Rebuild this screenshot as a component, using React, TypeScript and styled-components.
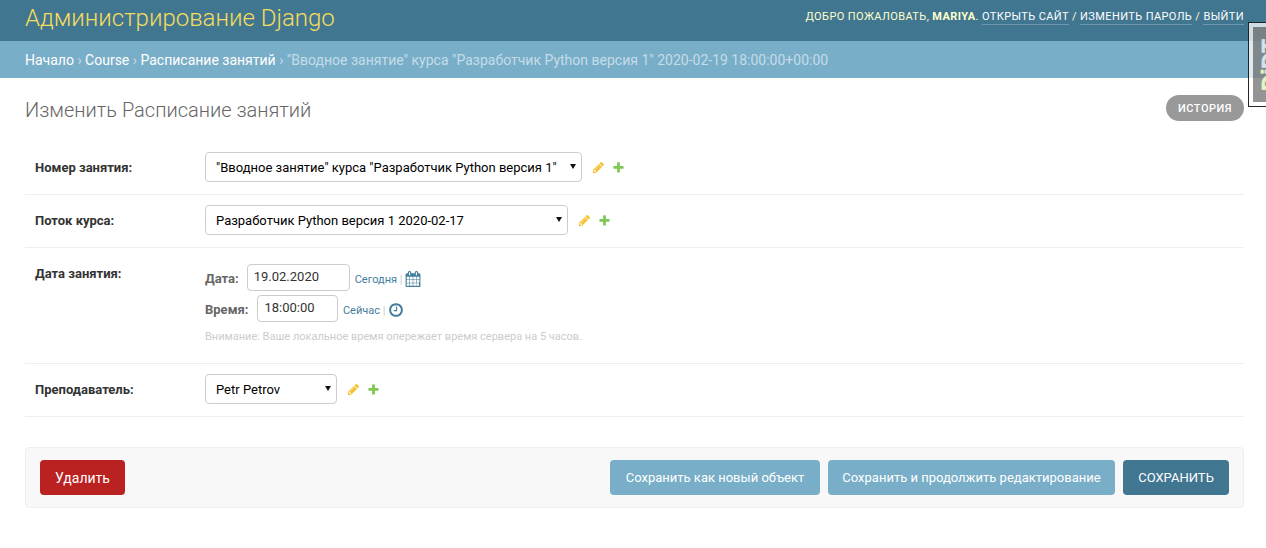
import React from "react";
import styled, { createGlobalStyle } from "styled-components";

const Global = createGlobalStyle`
  html, body { margin: 0; padding: 0; background: #fff; overflow: hidden; }
  body { font-family: Roboto, "Lucida Grande", Verdana, Arial, sans-serif; font-size: 14px; color: #333; }
  * { box-sizing: border-box; }
`;

const Page = styled.div`position: relative; width: 1266px; height: 548px; overflow: hidden;`;
const Header = styled.header`
  height: 41px; background: #417690; padding: 0 22px 0 25px;
  display: flex; justify-content: space-between; align-items: center;
`;
const Branding = styled.h1`margin: 0; font-size: 24px; font-weight: 300; color: #f5dd5d; line-height: 34px; position: relative; top: -3px;`;
const UserTools = styled.div`
  font-size: 11px; letter-spacing: 0.4px; text-transform: uppercase; color: #ffc; line-height: 14px;
  position: relative; top: -4px;
  strong { font-weight: 700; }
`;
const ToolLink = styled.a`color: #fff; border-bottom: 1px solid rgba(255,255,255,0.25); padding-bottom: 1px;`;
const Crumbs = styled.nav`
  height: 37px; background: #79aec8; padding: 0 25px; display: flex; align-items: center;
  font-size: 14px; color: #c4dce8; white-space: pre;
`;
const Crumb = styled.a`color: #fff;`;
const Content = styled.main`padding: 0 22px 0 25px;`;
const TitleRow = styled.div`display: flex; justify-content: space-between; align-items: center; height: 64px;`;
const Title = styled.h2`margin: 0; font-size: 20px; font-weight: 300; color: #666;`;
const HistoryButton = styled.a`
  display: flex; align-items: center; height: 26px; padding: 0 12px; border-radius: 15px; background: #999;
  color: #fff; font-size: 11px; font-weight: 500; letter-spacing: 0.5px; text-transform: uppercase;
  position: relative; top: -2px;
`;
const Row = styled.div<{ $h: number }>`
  height: ${(p) => p.$h}px; padding: 10px; border-bottom: 1px solid #eee; display: flex; align-items: flex-start;
`;
const Label = styled.label`width: 170px; flex: none; font-size: 13px; font-weight: 700; color: #333; padding-top: 8px; line-height: 16px;`;
const FieldLine = styled.div`display: flex; align-items: center; height: 30px;`;
const SelectWrap = styled.div<{ $w: number }>`
  position: relative; width: ${(p) => p.$w}px; height: 30px;
  &::after {
    content: ""; position: absolute; right: 6px; top: 12px; width: 0; height: 0; pointer-events: none;
    border-left: 3px solid transparent; border-right: 3px solid transparent; border-top: 5px solid #111;
  }
`;
const Select = styled.select`
  appearance: none; width: 100%; height: 30px; padding: 0 20px 0 10px; background: #fff; color: #000;
  border: 1px solid #ccc; border-radius: 4px; font-family: Roboto, sans-serif; font-size: 13px; outline: none;
`;
const IconLink = styled.a<{ $gap: number }>`display: inline-flex; margin-left: ${(p) => p.$gap}px; width: 13px; height: 13px;`;
const DateTime = styled.div`display: flex; flex-direction: column; margin-top: 6px;`;
const DTLine = styled.div`display: flex; align-items: center; height: 27px; margin-bottom: 4px; font-size: 13px; color: #666; font-weight: 700;`;
const DTLabel = styled.span`padding-top: 2px;`;
const TextInput = styled.input<{ $w: number; $gap: number }>`
  width: ${(p) => p.$w}px; height: 27px; margin-left: ${(p) => p.$gap}px; padding: 0 6px 2px 6px; border: 1px solid #ccc; border-radius: 4px;
  font-family: Roboto, sans-serif; font-size: 13px; color: #333; outline: none;
`;
const Shortcut = styled.span`margin-left: 5px; padding-top: 3px; font-size: 11px; font-weight: 400; color: #ccc; display: inline-flex; align-items: center; white-space: pre;`;
const ShortcutLink = styled.a`color: #447e9b;`;
const Help = styled.p`margin: 4px 0 0; font-size: 11px; font-weight: 400; color: #ccc; line-height: 14px;`;
const SubmitRow = styled.div`
  margin-top: 30px; height: 61px; padding: 0 14px; background: #f8f8f8; border: 1px solid #eee; border-radius: 4px;
  display: flex; align-items: center; gap: 8px;
`;
const Spacer = styled.div`flex: 1;`;
const Btn = styled.button<{ $bg: string; $w: number }>`
  width: ${(p) => p.$w}px; height: 35px; border: none; border-radius: 4px; background: ${(p) => p.$bg}; color: #fff;
  font-family: Roboto, sans-serif; font-size: 13px; padding: 0; margin: 0;
`;
const DeleteBtn = styled(Btn)`font-size: 14px;`;
const Handle = styled.div`
  position: absolute; top: 22px; right: 0; width: 18px; height: 85px; background: rgba(255,255,255,0.75); border: 1px solid rgba(0,0,0,0.85); border-right: none;
  overflow: hidden;
`;
const HandleInner = styled.div`
  position: absolute; left: 4px; top: 4px; bottom: 4px; width: 30px; background: rgba(0,0,0,0.42);
  display: flex; align-items: center; justify-content: center;
`;
const HandleText = styled.span`
  display: block; transform: rotate(-90deg); font-family: "Liberation Sans", sans-serif; font-size: 22px; font-weight: 700;
  color: #d4e2ea; line-height: 1; white-space: pre; -webkit-text-stroke: 0.7px currentColor;
  position: relative; left: 2px;
  b { color: #e2f7c4; font-weight: 700; }
`;

const Pencil = () => (
  <svg width="13" height="13" viewBox="0 0 1792 1792"><path fill="#f4c233" d="M491 1536l91-91-235-235-91 91v107h128v128h107zm523-928q0-22-22-22-10 0-17 7l-542 542q-7 7-7 17 0 22 22 22 10 0 17-7l542-542q7-7 7-17zm-54-192l416 416-832 832h-416v-416zm683 96q0 53-37 90l-166 166-416-416 166-165q36-38 90-38 53 0 91 38l235 234q37 39 37 91z" /></svg>
);
const Plus = () => (
  <svg width="13" height="13" viewBox="0 0 1792 1792"><path fill="#80c855" d="M1600 796v192q0 40-28 68t-68 28h-416v416q0 40-28 68t-68 28h-192q-40 0-68-28t-28-68v-416h-416q-40 0-68-28t-28-68v-192q0-40 28-68t68-28h416v-416q0-40 28-68t68-28h192q40 0 68 28t28 68v416h416q40 0 68 28t28 68z" /></svg>
);
const Calendar = () => (
  <svg width="16" height="16" viewBox="0 0 1792 1792"><path fill="#447e9b" d="M192 1664h288v-288h-288v288zm352 0h320v-288h-320v288zm-352-352h288v-320h-288v320zm352 0h320v-320h-320v320zm-352-384h288v-288h-288v288zm736 736h320v-288h-320v288zm-384-736h320v-288h-320v288zm736 736h288v-288h-288v288zm-352-352h320v-320h-320v320zm-352-864v-288q0-13-9.5-22.5t-22.5-9.5h-64q-13 0-22.5 9.5t-9.5 22.5v288q0 13 9.5 22.5t22.5 9.5h64q13 0 22.5-9.5t9.5-22.5zm736 864h288v-320h-288v320zm-384-384h320v-288h-320v288zm384 0h288v-288h-288v288zm32-480v-288q0-13-9.5-22.5t-22.5-9.5h-64q-13 0-22.5 9.5t-9.5 22.5v288q0 13 9.5 22.5t22.5 9.5h64q13 0 22.5-9.5t9.5-22.5zm384-64v1280q0 52-38 90t-90 38h-1408q-52 0-90-38t-38-90v-1280q0-52 38-90t90-38h128v-96q0-66 47-113t113-47h64q66 0 113 47t47 113v96h384v-96q0-66 47-113t113-47h64q66 0 113 47t47 113v96h128q52 0 90 38t38 90z" /></svg>
);
const Clock = () => (
  <svg width="16" height="16" viewBox="0 0 1792 1792"><path fill="#447e9b" d="M1024 544v448q0 14-9 23t-23 9h-320q-14 0-23-9t-9-23v-64q0-14 9-23t23-9h224v-352q0-14 9-23t23-9h64q14 0 23 9t9 23zm416 352q0-148-73-273t-198-198-273-73-273 73-198 198-73 273 73 273 198 198 273 73 273-73 198-198 73-273zm224 0q0 209-103 385.5t-279.5 279.5-385.5 103-385.5-103-279.5-279.5-103-385.5 103-385.5 279.5-279.5 385.5-103 385.5 103 279.5 279.5 103 385.5z" /></svg>
);

const RelatedSelect = ({ w, value }: { w: number; value: string }) => (
  <FieldLine>
    <SelectWrap $w={w}>
      <Select defaultValue={value}><option>{value}</option></Select>
    </SelectWrap>
    <IconLink $gap={10}><Pencil /></IconLink>
    <IconLink $gap={7}><Plus /></IconLink>
  </FieldLine>
);

export default function App() {
  return (
    <Page>
      <Global />
      <Header>
        <Branding>Администрирование Django</Branding>
        <UserTools>
          Добро пожаловать, <strong>Mariya</strong>. <ToolLink>Открыть сайт</ToolLink> / <ToolLink>Изменить пароль</ToolLink> / <ToolLink>Выйти</ToolLink>
        </UserTools>
      </Header>
      <Crumbs>
        <Crumb>Начало</Crumb> › <Crumb>Course</Crumb> › <Crumb>Расписание занятий</Crumb> › "Вводное занятие" курса "Разработчик Python версия 1" 2020-02-19 18:00:00+00:00
      </Crumbs>
      <Content>
        <TitleRow>
          <Title>Изменить Расписание занятий</Title>
          <HistoryButton>История</HistoryButton>
        </TitleRow>
        <div>
          <Row $h={53}>
            <Label>Номер занятия:</Label>
            <RelatedSelect w={377} value={'"Вводное занятие" курса "Разработчик Python версия 1"'} />
          </Row>
          <Row $h={53}>
            <Label>Поток курса:</Label>
            <RelatedSelect w={363} value="Разработчик Python версия 1 2020-02-17" />
          </Row>
          <Row $h={116}>
            <Label>Дата занятия:</Label>
            <DateTime>
              <DTLine>
                <DTLabel>Дата:</DTLabel>
                <TextInput $w={103} $gap={8} defaultValue="19.02.2020" />
                <Shortcut><ShortcutLink>Сегодня</ShortcutLink> | <Calendar /></Shortcut>
              </DTLine>
              <DTLine>
                <DTLabel>Время:</DTLabel>
                <TextInput $w={80.5} $gap={9} defaultValue="18:00:00" />
                <Shortcut><ShortcutLink>Сейчас</ShortcutLink> | <Clock /></Shortcut>
              </DTLine>
              <Help>Внимание: Ваше локальное время опережает время сервера на 5 часов.</Help>
            </DateTime>
          </Row>
          <Row $h={53}>
            <Label>Преподаватель:</Label>
            <RelatedSelect w={132} value="Petr Petrov" />
          </Row>
        </div>
        <SubmitRow>
          <DeleteBtn $bg="#ba2121" $w={85}>Удалить</DeleteBtn>
          <Spacer />
          <Btn $bg="#79aec8" $w={210}>Сохранить как новый объект</Btn>
          <Btn $bg="#79aec8" $w={287}>Сохранить и продолжить редактирование</Btn>
          <Btn $bg="#417690" $w={106}>СОХРАНИТЬ</Btn>
        </SubmitRow>
      </Content>
      <Handle>
        <HandleInner><HandleText><b>Dj</b>DT</HandleText></HandleInner>
      </Handle>
    </Page>
  );
}
